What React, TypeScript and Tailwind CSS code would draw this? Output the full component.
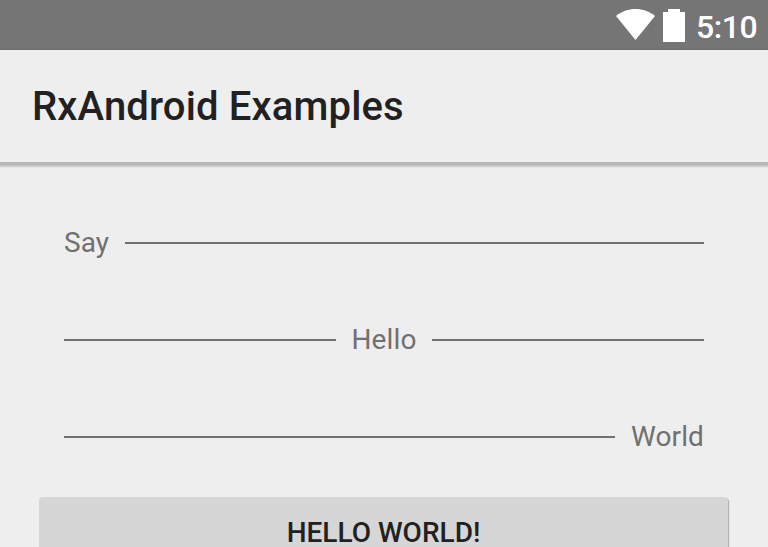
export default function App() {
  return (
    <div className="flex h-[547px] w-[768px] flex-col overflow-hidden bg-[#eeeeee] font-['Roboto',sans-serif]">
      <div className="flex h-[50px] shrink-0 items-start justify-end border-b border-[#6e6e6e] bg-[#757575] text-white">
        <svg className="mt-[9px] h-[31px] w-[39px]" viewBox="0 0 39 31" fill="#fff"><path d="M0 7C11-2.300 28-2.300 39 7L19.500 31Z" /></svg>
        <svg className="mt-[9px] ml-[8px] h-[33px] w-[22px]" viewBox="0 0 22 33" fill="#fff"><path d="M5 0H17V3H22V33H0V3H5Z" /></svg>
        <span className="mt-[7px] mr-[10px] ml-[11px] w-[62px] text-left text-[32px] leading-[40px] font-medium tracking-[-0.4px] whitespace-nowrap">5:10</span>
      </div>
      <header className="flex h-[112px] shrink-0 items-center px-[32px] pt-[2px] text-[40px] font-medium tracking-[0.15px] text-[#212121]">RxAndroid Examples</header>
      <div className="h-[6px] shrink-0 bg-linear-to-b from-[#b8b8b8] from-50% to-[#eeeeee]" />
      <main className="flex flex-col px-[64px] pt-[26px] text-[28px] text-[#707070]">
        <div className="flex h-[97px] items-center gap-4"><span>Say</span><div className="h-[2px] flex-1 bg-[#707070]" /></div>
        <div className="flex h-[97px] items-center gap-4"><div className="h-[2px] flex-1 bg-[#707070]" /><span className="tracking-[0.1px]">Hello</span><div className="h-[2px] flex-1 bg-[#707070]" /></div>
        <div className="flex h-[97px] items-center gap-4"><div className="h-[2px] flex-1 bg-[#707070]" /><span className="tracking-[0.12px]">World</span></div>
      </main>
      <button className="mt-[12px] mr-[40px] ml-[39px] h-[72px] shrink-0 rounded-[4px] bg-[#d6d6d6] text-[28px] font-medium text-[#212121] shadow-[1px_1px_1px_#aaa]">HELLO WORLD!</button>
    </div>
  );
}
